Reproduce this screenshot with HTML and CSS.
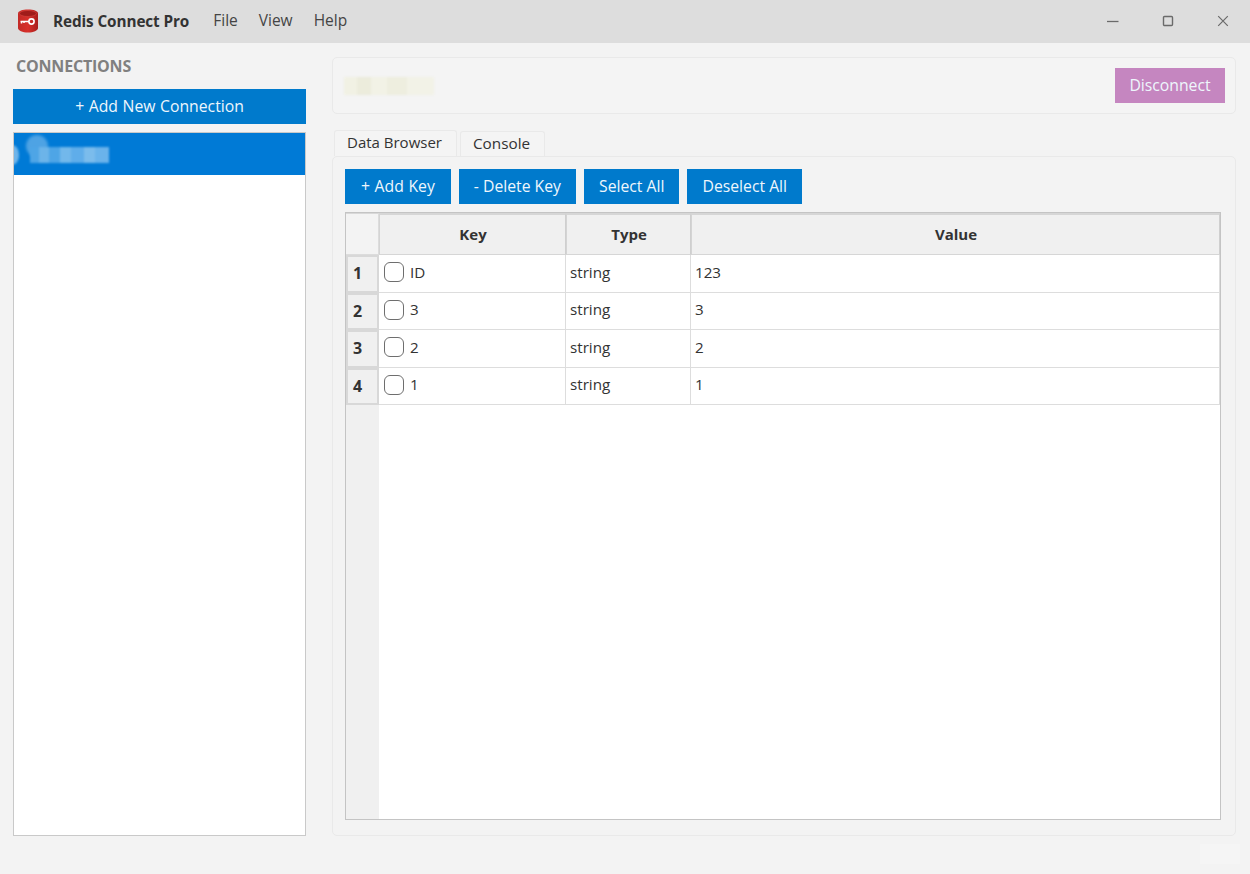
FILE: index.html
```html
<!DOCTYPE html>
<html lang="en">
<head>
<meta charset="utf-8">
<title>Redis Connect Pro</title>
<link rel="stylesheet" href="styles.css">
</head>
<body>
<div class="app">
  <header class="titlebar">
    <svg class="logo" width="24" height="26" viewBox="0 0 24 26">
      <defs>
        <linearGradient id="can" x1="0" x2="1" y1="0" y2="0">
          <stop offset="0" stop-color="#c22a26"/><stop offset=".5" stop-color="#d8302b"/><stop offset="1" stop-color="#a81e1c"/>
        </linearGradient>
      </defs>
      <path d="M2 5.500C2 3 6.500 1.500 12 1.500S22 3 22 5.500V20c0 2.500-4.500 4.500-10 4.500S2 22.500 2 20Z" fill="url(#can)"/>
      <ellipse cx="12" cy="5.500" rx="8.500" ry="3" fill="#a01c1a" stroke="#d5443e" stroke-width=".6"/>
      <circle cx="15.500" cy="13.500" r="2.600" fill="none" stroke="#fff" stroke-width="1.600"/>
      <path d="M13 13.500H4.500M5.500 13.500v2M8 13.500v1.500" fill="none" stroke="#fff" stroke-width="1.500"/>
    </svg>
    <span class="app-name">Redis Connect Pro</span>
    <nav class="menu"><span>File</span><span>View</span><span>Help</span></nav>
    <div class="win-controls">
      <svg width="12" height="12" viewBox="0 0 12 12"><path d="M0 6.500H11.500" stroke="#6a6a6a" stroke-width="1.300"/></svg>
      <svg width="12" height="12" viewBox="0 0 12 12"><rect x="1.500" y="1.500" width="9" height="9" rx="1" fill="none" stroke="#6a6a6a" stroke-width="1.400"/></svg>
      <svg width="12" height="12" viewBox="0 0 12 12"><path d="M1.200 1.200 10.800 10.800M10.800 1.200 1.200 10.800" stroke="#6a6a6a" stroke-width="1.200"/></svg>
    </div>
  </header>
  <div class="content">
    <aside class="sidebar">
      <h2 class="side-title">CONNECTIONS</h2>
      <button class="btn btn-wide">+ Add New Connection</button>
      <div class="conn-list">
        <div class="conn-item">
          <span class="blur-dot"></span>
          <span class="blur-side"></span>
          <span class="blur-name"></span>
        </div>
      </div>
    </aside>
    <main class="main">
      <section class="conn-head">
        <span class="blur-title"></span>
        <button class="btn btn-disconnect">Disconnect</button>
      </section>
      <div class="tabs">
        <div class="tab tab-active">Data Browser</div>
        <div class="tab">Console</div>
      </div>
      <section class="pane">
        <div class="toolbar">
          <button class="btn btn-add">+ Add Key</button>
          <button class="btn">- Delete Key</button>
          <button class="btn">Select All</button>
          <button class="btn">Deselect All</button>
        </div>
        <div class="table">
          <div class="corner"></div>
          <div class="th">Key</div>
          <div class="th">Type</div>
          <div class="th">Value</div>

          <div class="rh">1</div>
          <div class="td td-key"><span class="check"></span>ID</div>
          <div class="td">string</div>
          <div class="td">123</div>

          <div class="rh">2</div>
          <div class="td td-key"><span class="check"></span>3</div>
          <div class="td">string</div>
          <div class="td">3</div>

          <div class="rh">3</div>
          <div class="td td-key"><span class="check"></span>2</div>
          <div class="td">string</div>
          <div class="td">2</div>

          <div class="rh">4</div>
          <div class="td td-key"><span class="check"></span>1</div>
          <div class="td">string</div>
          <div class="td">1</div>

          <div class="gutter"></div>
          <div class="blank"></div>
        </div>
      </section>
    </main>
  </div>
  <div class="ghost"></div>
</div>
</body>
</html>
```

FILE: styles.css
```css
* { box-sizing: border-box; }
html, body { margin: 0; height: 100%; }
body {
  background: #f3f3f3;
  color: #333;
  font-family: "Open Sans", "Noto Sans", "Liberation Sans", sans-serif;
  font-size: 15px;
  overflow: hidden;
}
.app { width: 1250px; height: 874px; display: flex; flex-direction: column; position: relative; }

.titlebar {
  height: 43px;
  flex: none;
  background: #dddddd;
  display: flex;
  align-items: center;
  padding-left: 16px;
}
.logo { flex: none; margin-top: -1px; }
.app-name { margin-left: 13px; font-weight: 700; font-size: 15.300px; color: #333; letter-spacing: -.1px; padding-bottom: 1px; }
.menu { display: flex; gap: 21px; margin-left: 24px; font-size: 15.500px; color: #444; padding-bottom: 3px; }
.win-controls { margin-left: auto; display: flex; gap: 43px; padding-right: 21px; padding-bottom: 2px; }

.content { flex: 1; display: flex; padding: 14px 14px 38px 13px; gap: 26px; min-height: 0; }

.sidebar { width: 293px; flex: none; display: flex; flex-direction: column; }
.side-title {
  margin: 0 0 12px 3px;
  height: 20px;
  line-height: 18px;
  font-size: 16px;
  font-weight: 700;
  color: #808080;
  letter-spacing: -.2px;
}
.btn {
  border: 0;
  background: #007acc;
  color: #eef6fc;
  font: inherit;
  font-size: 15.750px;
  height: 35px;
  padding: 0 15px 2px;
}
.btn-add { padding: 0 16px 2px; word-spacing: .5px; }
.btn-wide { width: 293px; padding: 0 0 2px; flex: none; word-spacing: .5px; }
.conn-list {
  flex: 1;
  margin-top: 8px;
  background: #fff;
  border: 1px solid #c9c9c9;
}
.conn-item {
  height: 42px;
  background: #007ad6;
  position: relative;
  overflow: hidden;
}
.blur-dot {
  position: absolute; left: 12px; top: 2px; width: 22px; height: 22px;
  border-radius: 50%; background: #4ea3e4; filter: blur(1.500px);
}
.blur-side {
  position: absolute; left: -8px; top: 12px; width: 13px; height: 20px;
  border-radius: 50%; background: #6fb5ea; filter: blur(1px);
}
.blur-name {
  position: absolute; left: 16px; top: 14px; width: 79px; height: 16px;
  background: linear-gradient(90deg,
    #4ea5e6 0 12%, #6cb4e9 12% 24%, #4ea5e6 24% 38%, #72b8eb 38% 52%,
    #5fadea 52% 68%, #7bbcec 68% 82%, #6ab3eb 82% 100%);
  filter: blur(1px);
}

.main { flex: 1; min-width: 0; display: flex; flex-direction: column; }
.conn-head {
  height: 57px;
  flex: none;
  background: #f4f4f4;
  border: 1px solid #e9e9e9;
  border-radius: 5px;
  display: flex;
  align-items: center;
  justify-content: space-between;
  padding: 0 10px 0 11px;
}
.blur-title {
  width: 90px; height: 18px;
  background: linear-gradient(90deg,
    #f1f1e4 0 15%, #ececdc 15% 30%, #f2f2e6 30% 48%, #eeeedf 48% 70%, #f2f2e7 70% 100%);
  filter: blur(.8px);
}
.btn-disconnect { width: 110px; padding: 0 0 2px; background: #c586c0; }

.tabs { display: flex; gap: 3px; margin: 16px 0 0 2px; align-items: flex-end; height: 26px; flex: none; }
.tab {
  padding: 0 14px 0 12px;
  height: 25px;
  line-height: 23px;
  background: #f4f4f4;
  border: 1px solid #e9e9e9;
  border-bottom: 0;
  border-radius: 3px 3px 0 0;
  color: #333;
  font-size: 15.300px;
}
.tab-active { height: 26px; line-height: 22px; font-size: 15px; }

.pane {
  flex: 1;
  min-height: 0;
  background: #f3f3f3;
  border: 1px solid #e9e9e9;
  border-radius: 5px;
  padding: 12px 14px 15px 12px;
  display: flex;
  flex-direction: column;
}
.toolbar { display: flex; gap: 8px; flex: none; }
.table {
  margin-top: 8px;
  flex: 1;
  min-height: 0;
  background: #fff;
  border: 1px solid #c4c4c4;
  display: grid;
  grid-template-columns: 33px 187px 125px 1fr;
  grid-template-rows: 42px repeat(4, 37.500px) 1fr;
  color: #333;
}
.corner { background: #f3f3f3; border-bottom: 1px solid #dcdcdc; border-right: 1px solid #dcdcdc; border-top: 1px solid #d8d8d8; }
.th {
  background: #f0f0f0;
  border-top: 2px solid #d6d6d6;
  border-left: 1px solid #d4d4d4;
  border-right: 1px solid #cfcfcf;
  border-bottom: 1px solid #d6d6d6;
  display: flex;
  align-items: center;
  justify-content: center;
  font-weight: 700;
  font-size: 15px;
  padding: 0 0 2px 1px;
}
.rh {
  background: #f0f0f0;
  border: 2px solid #d8d8d8;
  display: flex;
  align-items: center;
  padding-left: 5px;
  font-weight: 700;
  font-size: 16px;
  padding-bottom: 1px;
}
.td {
  border-right: 1px solid #dddddd;
  border-bottom: 1px solid #dddddd;
  display: flex;
  align-items: center;
  padding-left: 4px;
  font-size: 15.200px;
  padding-bottom: 3px;
}
.td-key { gap: 6px; padding-left: 5px; padding-bottom: 2px; line-height: 1; }
.check {
  width: 20px;
  height: 20px;
  border: 1.500px solid #6e6e6e;
  border-radius: 6px;
  background: #fff;
  flex: none;
}
.gutter { background: #f0f0f0; }
.blank { grid-column: 2 / -1; background: #fff; }
.ghost { position: absolute; left: 1200px; top: 844px; width: 40px; height: 20px; background: #f5f5f5; }
```
